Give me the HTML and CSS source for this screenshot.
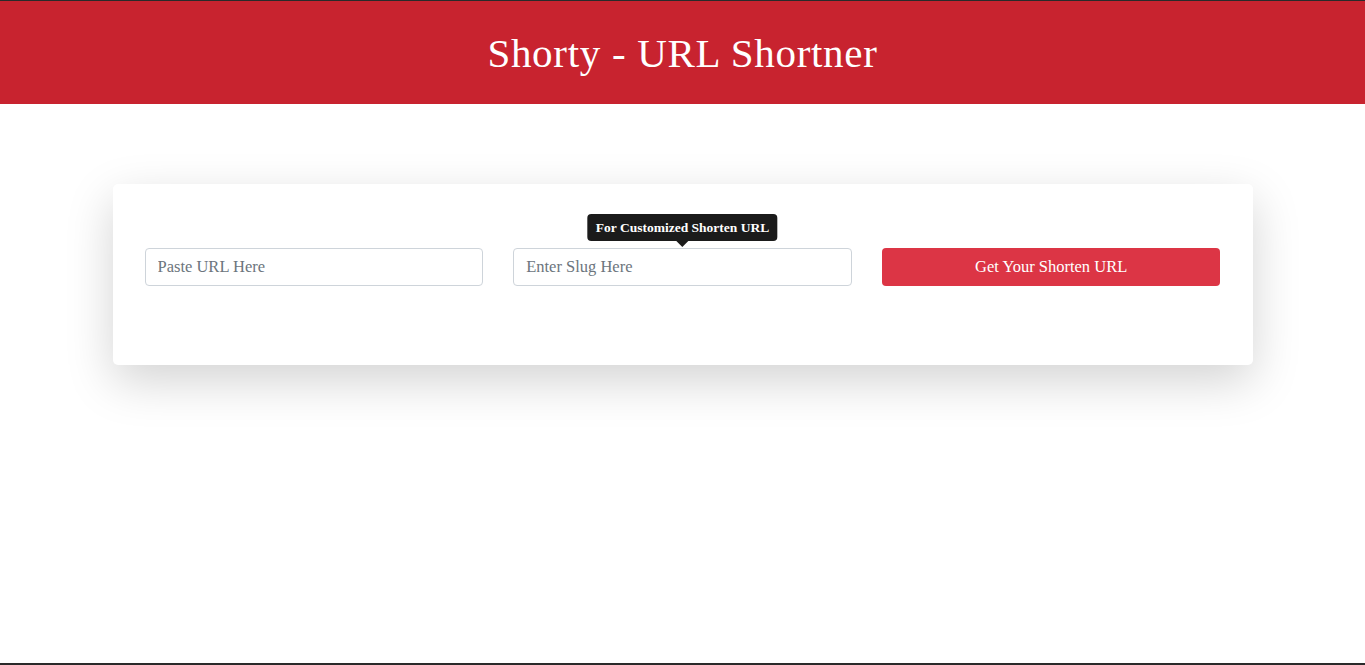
FILE: index.html
```html
<!DOCTYPE html>
<html lang="en">
<head>
<meta charset="utf-8">
<title>Shorty - URL Shortner</title>
<link rel="stylesheet" href="styles.css">
</head>
<body>
<header class="site-header">
  <h1 class="site-title">Shorty - URL Shortner</h1>
</header>
<main class="page">
  <section class="card">
    <form class="form-row">
      <div class="field">
        <input class="input" type="text" placeholder="Paste URL Here">
      </div>
      <div class="field field-tip">
        <span class="tooltip">For Customized Shorten URL</span>
        <input class="input" type="text" placeholder="Enter Slug Here">
      </div>
      <div class="field">
        <button class="btn" type="button">Get Your Shorten URL</button>
      </div>
    </form>
  </section>
</main>
</body>
</html>
```
FILE: styles.css
```css
* { box-sizing: border-box; }
html, body { height: 100%; }
body {
  margin: 0;
  font-family: "Liberation Serif", "DejaVu Serif", serif;
  background: #fff;
  border-top: 1px solid #2a2a2a;
  border-bottom: 2px solid #2a2a2a;
  min-height: 665px;
}
.site-header {
  background: #c8232f;
  height: 103px;
  display: flex;
  align-items: center;
  justify-content: center;
}
.site-title {
  margin: 0;
  color: #fff;
  font-weight: 400;
  font-size: 41px;
  letter-spacing: 0.7px;
  padding-top: 1px;
}
.page {
  display: flex;
  justify-content: center;
  padding-top: 80px;
}
.card {
  width: 1140px;
  background: #fff;
  border-radius: 5px;
  box-shadow: 0 16px 48px rgba(0, 0, 0, 0.175);
  padding: 64px 32px 79px;
}
.form-row {
  display: grid;
  grid-template-columns: 1fr 1fr 1fr;
  gap: 30px;
  margin: 0;
}
.field { position: relative; }
.input {
  width: 100%;
  height: 38px;
  border: 1px solid #ced4da;
  border-radius: 4px;
  padding: 0 12px;
  font-family: inherit;
  font-size: 16.5px;
  color: #212529;
  background: #fff;
}
.input::placeholder { color: #6c757d; }
.btn {
  width: 100%;
  height: 38px;
  border: 0;
  border-radius: 4px;
  background: #dc3545;
  color: #fff;
  font-family: inherit;
  font-size: 16.5px;
}
.tooltip {
  position: absolute;
  left: 50%;
  bottom: 100%;
  transform: translateX(-50%);
  margin-bottom: 7px;
  background: #1b1b1b;
  color: #fff;
  font-size: 13.5px;
  font-weight: 700;
  white-space: nowrap;
  padding: 5px 8px;
  border-radius: 4px;
  line-height: 17px;
}
.tooltip::after {
  content: "";
  position: absolute;
  top: 100%;
  left: 50%;
  transform: translateX(-50%);
  border: 6px solid transparent;
  border-top-color: #1b1b1b;
  border-bottom: 0;
}
```
